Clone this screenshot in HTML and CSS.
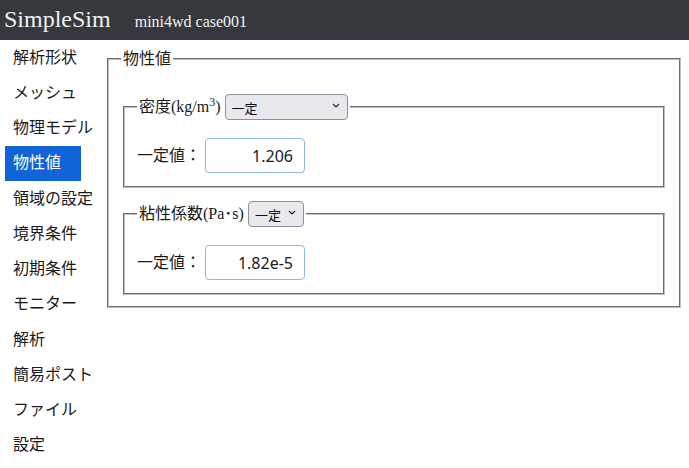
FILE: index.html
```html
<!DOCTYPE html>
<html lang="ja">
<head>
<meta charset="utf-8">
<title>SimpleSim</title>
<link rel="stylesheet" href="styles.css">
</head>
<body>
<header class="topbar">
  <span class="brand">SimpleSim</span>
  <span class="case-name">mini4wd case001</span>
</header>
<div class="layout">
  <nav class="sidebar">
    <a class="nav-item">解析形状</a>
    <a class="nav-item">メッシュ</a>
    <a class="nav-item">物理モデル</a>
    <a class="nav-item active">物性値</a>
    <a class="nav-item">領域の設定</a>
    <a class="nav-item">境界条件</a>
    <a class="nav-item">初期条件</a>
    <a class="nav-item">モニター</a>
    <a class="nav-item">解析</a>
    <a class="nav-item">簡易ポスト</a>
    <a class="nav-item">ファイル</a>
    <a class="nav-item">設定</a>
  </nav>
  <main class="main">
    <fieldset class="group">
      <legend class="group-title">物性値</legend>
      <fieldset class="prop prop-first">
        <legend class="prop-title"><span class="prop-name">密度(kg/m<sup class="sup">3</sup>)</span>
          <span class="select-wrap">
            <select class="select select-wide"><option>一定</option></select>
            <svg class="chev" width="8" height="5" viewBox="0 0 8 5"><path d="M1 1 L4 4 L7 1" fill="none" stroke="#222" stroke-width="1.2"/></svg>
          </span>
        </legend>
        <div class="row">
          <label class="row-label">一定値：</label>
          <input class="value" type="text" value="1.206">
        </div>
      </fieldset>
      <fieldset class="prop prop-second">
        <legend class="prop-title"><span class="prop-name">粘性係数(Pa･s)</span>
          <span class="select-wrap">
            <select class="select select-narrow"><option>一定</option></select>
            <svg class="chev" width="8" height="5" viewBox="0 0 8 5"><path d="M1 1 L4 4 L7 1" fill="none" stroke="#222" stroke-width="1.2"/></svg>
          </span>
        </legend>
        <div class="row">
          <label class="row-label">一定値：</label>
          <input class="value" type="text" value="1.82e-5">
        </div>
      </fieldset>
    </fieldset>
  </main>
</div>
</body>
</html>
```
FILE: styles.css
```css
html, body {
  margin: 0;
  padding: 0;
  background: #fff;
}
body {
  font-family: "Liberation Serif", "Noto Sans CJK JP", serif;
  font-size: 16px;
  line-height: 24px;
  color: #1a1a1a;
}
.topbar {
  height: 40px;
  background: #35383d;
  color: #f2f2f2;
  display: flex;
  align-items: baseline;
  padding-left: 4px;
  box-sizing: border-box;
  padding-top: 6px;
}
.brand {
  font-size: 24px;
  line-height: 26px;
}
.case-name {
  font-size: 16px;
  margin-left: 24px;
}
.layout {
  display: flex;
}
.sidebar {
  width: 100px;
  padding-left: 5px;
  display: flex;
  flex-direction: column;
}
.nav-item {
  display: block;
  width: 60px;
  padding: 5.625px 8px;
  white-space: nowrap;
  color: #1a1a1a;
}
.nav-item.active {
  background: #1064d6;
  color: #fff;
}
.main {
  flex: 1;
  padding-top: 7px;
  padding-right: 6px;
}
.group {
  margin: 0 2px;
  border: 2px groove #c0c0c0;
  padding: 5px 12px 11px;
}
.group-title {
  padding: 0 2px;
}
.prop {
  margin: 18px 2px 0;
  border: 2px groove #c0c0c0;
  padding: 18px 12px 13px;
}
.prop-second {
  margin-top: 13px;
}
.prop-title {
  padding: 0 2px;
  display: flex;
  align-items: center;
}
.prop-name {
  white-space: nowrap;
}
.sup {
  font-size: 12px;
  line-height: 0;
  vertical-align: 6px;
}
.select-wrap {
  position: relative;
  display: inline-block;
  margin-left: 4px;
  height: 26px;
}
.select {
  appearance: none;
  -webkit-appearance: none;
  height: 26px;
  box-sizing: border-box;
  background: #e9e9ed;
  border: 1px solid #8f8f9d;
  border-radius: 4px;
  font-family: "Noto Sans CJK JP", sans-serif;
  font-size: 13px;
  color: #111;
  padding: 0 20px 0 6px;
  margin: 0;
}
.select-wide {
  width: 123px;
}
.select-narrow {
  width: 56px;
}
.chev {
  position: absolute;
  right: 8px;
  top: 9px;
  pointer-events: none;
}
.row {
  display: flex;
  align-items: center;
}
.row-label {
  width: 68px;
}
.value {
  width: 100px;
  height: 35px;
  box-sizing: border-box;
  border: 1px solid #8db4ee;
  border-radius: 4px;
  padding: 0 11px;
  text-align: right;
  font-family: "Noto Sans", sans-serif;
  font-size: 16px;
  color: #1a1a1a;
  margin: 0;
}
```
